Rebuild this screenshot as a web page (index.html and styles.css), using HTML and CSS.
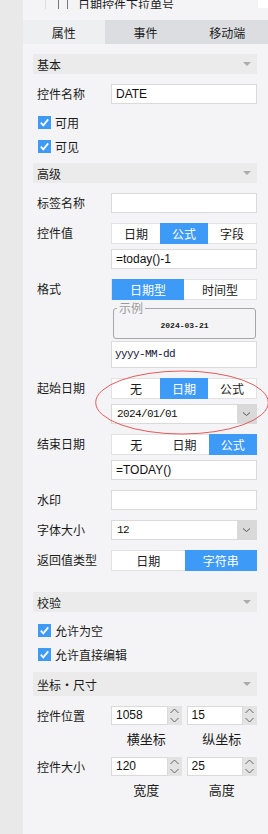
FILE: index.html
```html
<!DOCTYPE html>
<html lang="zh">
<head>
    <meta charset="UTF-8">
    <title>控件属性</title>
    <link rel="stylesheet" href="styles.css">
</head>
<body>
    <div class="app">
        <div class="strip"></div>

        <div class="panel">

            <div class="tree">
                <div class="treeRow">
                    <span class="treeIcon"></span>
                    <span class="treeText">日期控件下拉单号</span>
                </div>
                <div class="treeCorner"></div>
            </div>

            <div class="tabs">
                <div class="tab active">属性</div>
                <div class="tab">事件</div>
                <div class="tab">移动端</div>
            </div>

            <div class="props">

                <div class="group">基本</div>

                <div class="field">
                    <span class="label">控件名称</span>
                    <div class="ctrl"><div class="input">DATE</div></div>
                </div>

                <div class="check">
                    <span class="box"><svg width="13" height="13" viewBox="0 0 13 13"><polyline points="2.8,6.6 5.3,9.4 10.2,3.4" /></svg></span>
                    可用
                </div>
                <div class="check second">
                    <span class="box"><svg width="13" height="13" viewBox="0 0 13 13"><polyline points="2.8,6.6 5.3,9.4 10.2,3.4" /></svg></span>
                    可见
                </div>

                <div class="group">高级</div>

                <div class="field">
                    <span class="label">标签名称</span>
                    <div class="ctrl"><div class="input"></div></div>
                </div>

                <div class="field">
                    <span class="label">控件值</span>
                    <div class="ctrl">
                        <div class="seg"><span>日期</span><span class="on">公式</span><span>字段</span></div>
                        <div class="input">=today()-1</div>
                    </div>
                </div>

                <div class="field">
                    <span class="label">格式</span>
                    <div class="ctrl tight">
                        <div class="seg"><span class="on">日期型</span><span>时间型</span></div>
                        <fieldset class="sample">
                            <legend>示例</legend>
                            <div class="sampleVal">2024-03-21</div>
                        </fieldset>
                        <div class="input tall mono">yyyy-MM-dd</div>
                    </div>
                </div>

                <div class="field">
                    <span class="label">起始日期</span>
                    <div class="ctrl">
                        <div class="seg"><span>无</span><span class="on">日期</span><span>公式</span></div>
                        <div class="select">
                            <span class="val mono">2024/01/01</span>
                            <span class="btn"><svg width="19" height="20" viewBox="0 0 19 20"><polyline points="6,8.5 9.5,11.5 13,8.5" /></svg></span>
                        </div>
                    </div>
                </div>

                <div class="field">
                    <span class="label">结束日期</span>
                    <div class="ctrl">
                        <div class="seg"><span>无</span><span>日期</span><span class="on">公式</span></div>
                        <div class="input">=TODAY()</div>
                    </div>
                </div>

                <div class="field">
                    <span class="label">水印</span>
                    <div class="ctrl"><div class="input"></div></div>
                </div>

                <div class="field">
                    <span class="label">字体大小</span>
                    <div class="ctrl">
                        <div class="select">
                            <span class="val mono">12</span>
                            <span class="btn"><svg width="19" height="20" viewBox="0 0 19 20"><polyline points="6,8.5 9.5,11.5 13,8.5" /></svg></span>
                        </div>
                    </div>
                </div>

                <div class="field">
                    <span class="label">返回值类型</span>
                    <div class="ctrl">
                        <div class="seg"><span>日期</span><span class="on">字符串</span></div>
                    </div>
                </div>

                <div class="group gap">校验</div>

                <div class="check">
                    <span class="box"><svg width="13" height="13" viewBox="0 0 13 13"><polyline points="2.8,6.6 5.3,9.4 10.2,3.4" /></svg></span>
                    允许为空
                </div>
                <div class="check second">
                    <span class="box"><svg width="13" height="13" viewBox="0 0 13 13"><polyline points="2.8,6.6 5.3,9.4 10.2,3.4" /></svg></span>
                    允许直接编辑
                </div>

                <div class="group tallGroup">坐标・尺寸</div>

                <div class="field">
                    <span class="label">控件位置</span>
                    <div class="ctrl">
                        <div class="spins">
                            <div class="spin">
                                <span class="num">1058</span>
                                <span class="arrows"><svg width="14" height="19" viewBox="0 0 14 19"><polyline points="2.5,7 6.5,3 10.5,7" /><polyline points="2.5,12 6.5,16 10.5,12" /></svg></span>
                            </div>
                            <div class="spin">
                                <span class="num">15</span>
                                <span class="arrows"><svg width="14" height="19" viewBox="0 0 14 19"><polyline points="2.5,7 6.5,3 10.5,7" /><polyline points="2.5,12 6.5,16 10.5,12" /></svg></span>
                            </div>
                        </div>
                        <div class="caps"><span>横坐标</span><span>纵坐标</span></div>
                    </div>
                </div>

                <div class="field sizeRow">
                    <span class="label">控件大小</span>
                    <div class="ctrl">
                        <div class="spins">
                            <div class="spin">
                                <span class="num">120</span>
                                <span class="arrows"><svg width="14" height="19" viewBox="0 0 14 19"><polyline points="2.5,7 6.5,3 10.5,7" /><polyline points="2.5,12 6.5,16 10.5,12" /></svg></span>
                            </div>
                            <div class="spin">
                                <span class="num">25</span>
                                <span class="arrows"><svg width="14" height="19" viewBox="0 0 14 19"><polyline points="2.5,7 6.5,3 10.5,7" /><polyline points="2.5,12 6.5,16 10.5,12" /></svg></span>
                            </div>
                        </div>
                        <div class="caps"><span>宽度</span><span>高度</span></div>
                    </div>
                </div>

            </div>

            <!-- red annotation circle drawn over the start date -->
            <svg class="mark" width="176" height="66" viewBox="0 0 176 66">
                <ellipse cx="87" cy="32.5" rx="86.3" ry="31.5" />
            </svg>

        </div>
    </div>
</body>
</html>
```

FILE: styles.css
```css
* {
    box-sizing: border-box;
}

body {
    margin: 0;
    background-color: #f4f4f6;
    font-family: "Noto Sans CJK SC", "Liberation Sans", sans-serif;
    font-size: 12px;
    color: #1b1b1b;
}

.app {
    display: flex;
    height: 834px;
}

.strip {
    width: 23px;
    flex: none;
    background-color: #e9e9e9;
}

.panel {
    flex: 1;
    position: relative;
    overflow: hidden;
}

/* tree row cut off at the top, only the bottom of it shows */
.tree {
    height: 20px;
    display: flex;
}

.treeRow {
    flex: 1;
    height: 9px;
    margin-left: 22px;
    border-left: 1px solid #dedede;
    display: flex;
    align-items: flex-end;
    gap: 10px;
    padding-left: 12px;
    overflow: hidden;
    line-height: 14px;
}

.treeIcon {
    width: 10px;
    height: 14px;
    flex: none;
    border: 1px solid #777;
    margin-bottom: -1px;
}

.treeText {
    margin-bottom: -3px;
    white-space: nowrap;
}

.treeCorner {
    width: 10px;
    height: 8px;
    background-color: #fff;
}

.tabs {
    display: grid;
    grid-template-columns: repeat(3, 1fr);
    height: 24px;
    background-color: #dcdde0;
}

.tab {
    display: flex;
    align-items: center;
    justify-content: center;
}

.tab.active {
    background-color: #eeeff1;
}

.props {
    padding: 0 11px 0 10px;
}

.group {
    margin-top: 10px;
    height: 20px;
    background-color: #ebebeb;
    display: flex;
    align-items: center;
    justify-content: space-between;
    padding: 0 6px 0 4px;
}

.group:after {
    content: "";
    border-left: 4px solid transparent;
    border-right: 4px solid transparent;
    border-top: 4px solid #ababab;
}

.group.gap {
    margin-top: 21px;
}

.group.tallGroup {
    margin-top: 11px;
    height: 24px;
}

.field {
    display: grid;
    grid-template-columns: 78px 1fr;
    margin-top: 10px;
}

.field.sizeRow {
    margin-top: 8px;
}

.label {
    padding-left: 4px;
    line-height: 20px;
    white-space: nowrap;
}

.ctrl {
    display: flex;
    flex-direction: column;
    gap: 5px;
    min-width: 0;
}

.ctrl.tight {
    gap: 2px;
}

.input {
    height: 20px;
    background-color: #fff;
    border: 1px solid #dadada;
    padding-left: 4px;
    font-family: "Liberation Sans", sans-serif;
    font-size: 12px;
    line-height: 18px;
    color: #111;
}

.input.tall {
    height: 27px;
    line-height: 25px;
    padding-left: 3px;
    color: #141436;
}

.mono {
    font-family: "Liberation Mono", monospace;
    font-size: 11px;
    letter-spacing: -0.6px;
}

.seg {
    display: flex;
    height: 21px;
    background-color: #fff;
    border: 1px solid #e2e2e2;
}

.seg span {
    flex: 1;
    display: flex;
    align-items: center;
    justify-content: center;
}

.seg .on {
    background-color: #3e9af7;
    color: #fff;
    margin: -1px 0;
}

.seg .on:last-child {
    margin-right: -1px;
}

.sample {
    height: 37px;
    margin: 0 1px 0 2px;
    padding: 0;
    border: 1px solid #a6a6a6;
    border-radius: 3px;
}

.sample legend {
    margin-left: 3px;
    padding: 0 2px;
    line-height: 12px;
    color: #9a9a9a;
}

.sampleVal {
    text-align: center;
    line-height: 24px;
    font-family: "Liberation Mono", monospace;
    font-size: 8px;
    font-weight: bold;
    color: #222;
}

.select {
    display: flex;
    height: 20px;
    background-color: #fff;
    border: 1px solid #dadada;
}

.select .val {
    flex: 1;
    padding-left: 5px;
    line-height: 18px;
    color: #111;
}

.select .btn {
    width: 20px;
    margin: -1px -1px -1px 0;
    background-color: #d9d9d9;
    display: flex;
}

.select .btn polyline {
    fill: none;
    stroke: #555;
    stroke-width: 1;
}

.check {
    display: flex;
    align-items: center;
    gap: 4px;
    height: 13px;
    margin-top: 12px;
    padding-left: 5px;
}

.check.second {
    margin-top: 11px;
}

.box {
    width: 13px;
    height: 13px;
    background-color: #3e9af7;
    display: flex;
}

.box polyline {
    fill: none;
    stroke: #fff;
    stroke-width: 1.8;
}

.spins,
.caps {
    display: grid;
    grid-template-columns: 1fr 1fr;
    gap: 5px;
}

.spin {
    display: flex;
    height: 19px;
}

.spin .num {
    flex: 1;
    background-color: #fff;
    border: 1px solid #dadada;
    padding-left: 4px;
    font-family: "Liberation Sans", sans-serif;
    line-height: 17px;
    color: #111;
}

.spin .arrows {
    width: 14px;
    background-color: #e3e3e3;
    display: flex;
}

.spin .arrows polyline {
    fill: none;
    stroke: #666;
    stroke-width: 1;
}

.caps {
    margin-top: -1px;
    line-height: 20px;
    text-align: center;
    font-size: 13px;
}

.mark {
    position: absolute;
    left: 72px;
    top: 370px;
}

.mark ellipse {
    fill: none;
    stroke: #e35a5a;
    stroke-width: 1;
}
```
